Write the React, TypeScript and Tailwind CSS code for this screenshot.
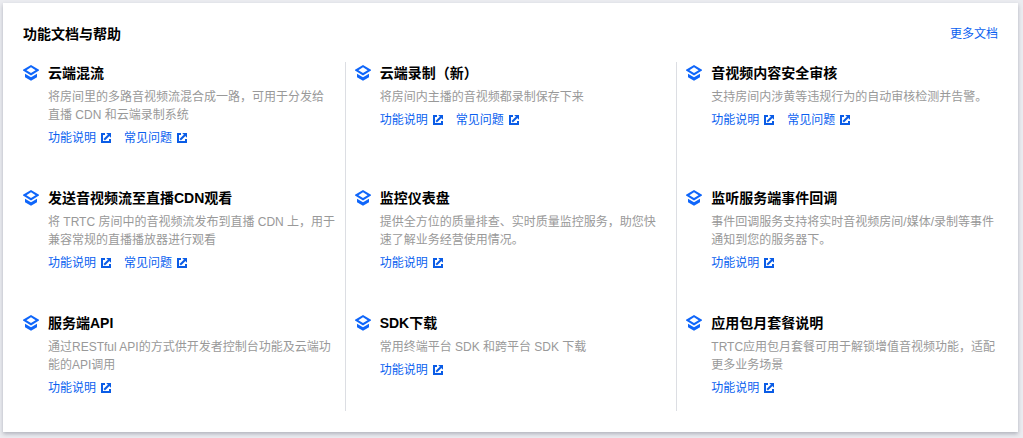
type DocItem = { title: string; desc: string; links: string[] };

const GUIDE = "功能说明";
const FAQ   = "常见问题";

const DOCS: DocItem[] = [
  { title: "云端混流", desc: "将房间里的多路音视频流混合成一路，可用于分发给直播 CDN 和云端录制系统", links: [GUIDE, FAQ] },
  { title: "云端录制（新）", desc: "将房间内主播的音视频都录制保存下来", links: [GUIDE, FAQ] },
  { title: "音视频内容安全审核", desc: "支持房间内涉黄等违规行为的自动审核检测并告警。", links: [GUIDE, FAQ] },
  { title: "发送音视频流至直播CDN观看", desc: "将 TRTC 房间中的音视频流发布到直播 CDN 上，用于兼容常规的直播播放器进行观看", links: [GUIDE, FAQ] },
  { title: "监控仪表盘", desc: "提供全方位的质量排查、实时质量监控服务，助您快速了解业务经营使用情况。", links: [GUIDE] },
  { title: "监听服务端事件回调", desc: "事件回调服务支持将实时音视频房间/媒体/录制等事件通知到您的服务器下。", links: [GUIDE] },
  { title: "服务端API", desc: "通过RESTful API的方式供开发者控制台功能及云端功能的API调用", links: [GUIDE] },
  { title: "SDK下载", desc: "常用终端平台 SDK 和跨平台 SDK 下载", links: [GUIDE] },
  { title: "应用包月套餐说明", desc: "TRTC应用包月套餐可用于解锁增值音视频功能，适配更多业务场景", links: [GUIDE] },
];

function LayersIcon() {
  return (
    <svg viewBox="0 0 16 16" className="w-4 h-4 mt-[3px] shrink-0" fill="#0f66fa" aria-hidden="true">
      <path fillRule="evenodd" d="M8 0 16 4.8v.8L8 10.4 0 5.6v-.8ZM8 2.3 3.4 5.2 8 8.1 12.6 5.2Z" />
      <path d="M2 8.8 8 12.3l6-3.5v3.4L8 15.8l-6-3.6Z" />
    </svg>
  );
}

function JumpIcon() {
  return (
    <svg viewBox="0 0 12 12" className="w-3 h-3 shrink-0" fill="none" stroke="#0a5ce6" strokeWidth="2" aria-hidden="true">
      <path d="M5 2H2v8h8V7" />
      <path d="M4.2 7.8 9 3" />
      <path d="M6.2 1H11v4.8Z" fill="#0a5ce6" stroke="none" />
    </svg>
  );
}

function DocCell({ doc }: { doc: DocItem }) {
  return (
    <li className="flex gap-[9px] px-[9px] pb-10 border-l border-[#dcdee3] nth-[3n+1]:border-transparent nth-[n+7]:pb-[14px]">
      <LayersIcon />
      <div className="flex-1 min-w-0">
        <h3 className="text-sm leading-[22px] font-bold text-black">{doc.title}</h3>
        <p className="mt-1 text-xs leading-[18px] text-[#999]">{doc.desc}</p>
        <div className="mt-[5px] flex gap-3 text-xs leading-[18px]">
          {doc.links.map(label => (
            <a key={label} href="#" className="inline-flex items-center gap-1 text-[#0a5ff0] hover:underline">
              {label}<JumpIcon />
            </a>
          ))}
        </div>
      </div>
    </li>
  );
}

export default function App() {
  return (
    <div className="min-h-screen bg-[#ebecf0] pt-[3px] pl-[3px] pr-[5px] font-['Liberation_Sans','Noto_Sans_CJK_SC',sans-serif]" lang="zh-CN">
      <section className="bg-white px-[10px] pt-5 pb-[21px] shadow-[0_2px_4px_rgba(54,58,80,0.32)]">
        {/* Header */}
        <div className="flex items-center justify-between px-[10px]">
          <h2 className="text-sm leading-[22px] font-bold text-black">功能文档与帮助</h2>
          <a href="#" className="text-xs leading-[18px] text-[#0a5ff0] hover:underline">更多文档</a>
        </div>

        {/* Docs */}
        <ul className="mt-[17px] grid grid-cols-3">
          {DOCS.map(doc => <DocCell key={doc.title} doc={doc} />)}
        </ul>
      </section>
    </div>
  );
}
